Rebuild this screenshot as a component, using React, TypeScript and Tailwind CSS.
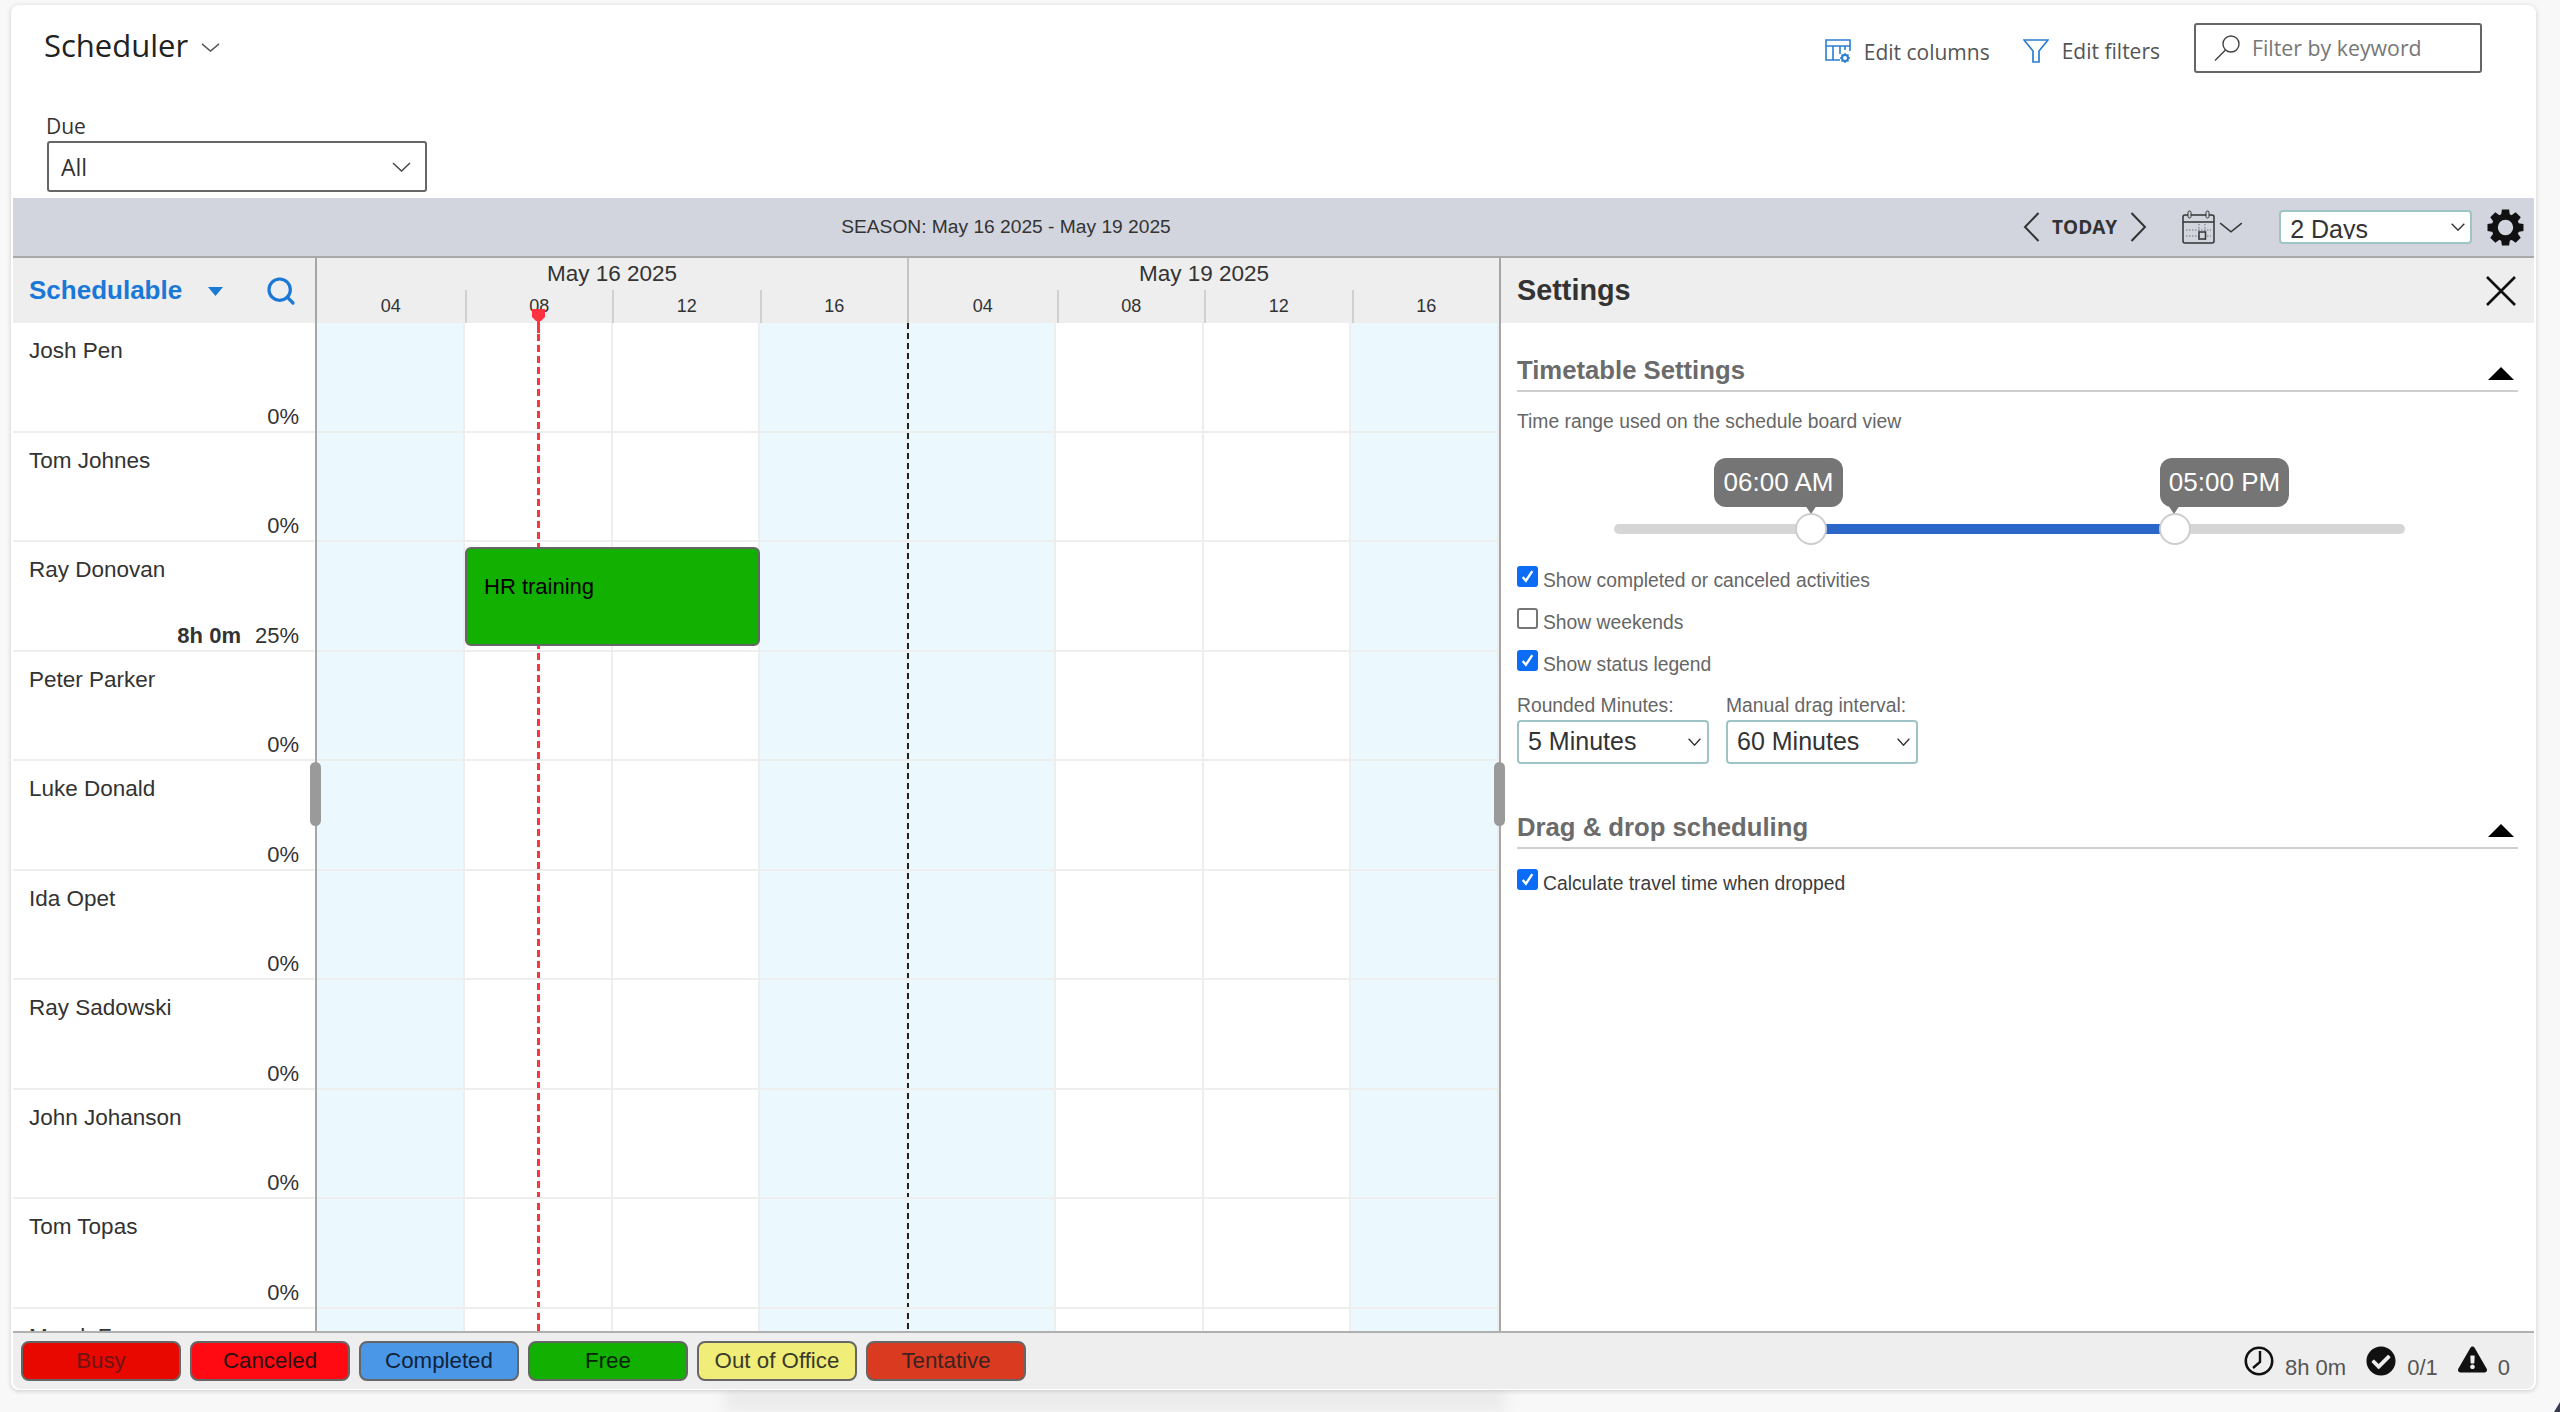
import { Search } from "lucide-react";
import { FaCheckCircle, FaExclamationTriangle } from "react-icons/fa";

const resources = [
  { name: "Josh Pen", pct: "0%" },
  { name: "Tom Johnes", pct: "0%" },
  { name: "Ray Donovan", pct: "25%", hours: "8h 0m" },
  { name: "Peter Parker", pct: "0%" },
  { name: "Luke Donald", pct: "0%" },
  { name: "Ida Opet", pct: "0%" },
  { name: "Ray Sadowski", pct: "0%" },
  { name: "John Johanson", pct: "0%" },
  { name: "Tom Topas", pct: "0%" },
  { name: "Marek F", pct: "" },
];

const legend = [
  { label: "Busy", cls: "bg-[#e90800] text-[#6f1414]" },
  { label: "Canceled", cls: "bg-[#ff0a12] text-[#2a1010]" },
  { label: "Completed", cls: "bg-[#4a97e8] text-[#10233a]" },
  { label: "Free", cls: "bg-[#12b000] text-[#06230a]" },
  { label: "Out of Office", cls: "bg-[#f0ee78] text-[#3a3a2a]" },
  { label: "Tentative", cls: "bg-[#da3a1f] text-[#3a2320]" },
];

const cells = [true, false, false, true, true, false, false, true];

const Chevron = ({ className }: { className: string }) => (
  <svg viewBox="0 0 20 10" fill="none" className={className} preserveAspectRatio="none">
    <path d="M1 1l9 8 9-8" stroke="currentColor" strokeWidth="1.4" vectorEffect="non-scaling-stroke" />
  </svg>
);

const SideChevron = ({ flip }: { flip?: boolean }) => (
  <svg viewBox="0 0 17 30" fill="none" className={`h-[30px] w-[17px] text-[#333] ${flip ? "rotate-180" : ""}`}>
    <path d="M15.5 1L2 15l13.5 14" stroke="currentColor" strokeWidth="2" />
  </svg>
);

const Gear = () => (
  <svg viewBox="0 0 36 36" className="ml-[15px] h-[37px] w-[37px] text-[#111]" fill="currentColor">
    {[0, 45, 90, 135, 180, 225, 270, 315].map((a) => (
      <path key={a} d="M14.5 0.5h7l1 7h-9z" transform={`rotate(${a} 18 18)`} />
    ))}
    <circle cx="18" cy="18" r="10.5" fill="none" stroke="currentColor" strokeWidth="6" />
  </svg>
);

const Check = ({ on = true }: { on?: boolean }) =>
  on ? (
    <span className="flex h-[21px] w-[21px] shrink-0 items-center justify-center rounded-[3px] bg-[#0b6cf5]">
      <svg viewBox="0 0 16 16" className="h-[17px] w-[17px]" fill="none">
        <path d="M3.5 8.5l3 3.5 6-9" stroke="#fff" strokeWidth="2.2" />
      </svg>
    </span>
  ) : (
    <span className="h-[21px] w-[21px] shrink-0 rounded-[3px] border-2 border-[#767676] bg-white" />
  );

const CheckRow = ({ label, on, dark }: { label: string; on?: boolean; dark?: boolean }) => (
  <div className="flex h-[42px] items-start gap-[5px]">
    <Check on={on} />
    <span className={`mt-[3px] text-[19.3px] leading-[24px] ${dark ? "text-[#3c3c3c]" : "text-[#666]"}`}>{label}</span>
  </div>
);

const SectionHead = ({ title }: { title: string }) => (
  <div className="flex h-[36px] justify-between border-b-2 border-[#cfcfcf]">
    <span className="text-[25.7px] font-bold leading-[28px] text-[#6b6b6b]">{title}</span>
    <svg viewBox="0 0 26 13" className="mr-[4px] mt-[11px] h-[13px] w-[26px]">
      <path d="M13 0l13 13H0z" fill="#000" />
    </svg>
  </div>
);

const TinySelect = ({ value }: { value: string }) => (
  <div className="flex h-[44px] w-[192px] items-center justify-between rounded-[4px] border-2 border-[#9fc4c6] bg-white pl-[9px] pr-[6px] text-[25px] text-[#333]">
    {value}
    <Chevron className="h-[8px] w-[13px] text-[#333]" />
  </div>
);

const Tip = ({ label, left, tail }: { label: string; left: number; tail: string }) => (
  <div
    className="absolute top-0 flex h-[49px] w-[129px] items-center justify-center rounded-[12px] bg-[#757575] text-[26px] text-white"
    style={{ left }}
  >
    {label}
    <span className={`absolute top-[47px] h-0 w-0 border-x-[6px] border-t-[9px] border-x-transparent border-t-[#757575] ${tail}`} />
  </div>
);

const Thumb = ({ left }: { left: number }) => (
  <span
    className="absolute top-[55px] h-[32px] w-[32px] rounded-full border-2 border-[#cdcdcd] bg-white"
    style={{ left }}
  />
);

const App = () => {
  return (
    <div className="relative h-[1412px] w-[2560px] overflow-hidden bg-[#f8f8f8] pl-[11px] pt-[5px] font-['Liberation_Sans',Arial,sans-serif]">
      <div className="absolute bottom-0 left-[725px] h-[24px] w-[780px] bg-[#ebebeb] blur-[6px]" />
      <svg viewBox="0 0 6 10" className="absolute bottom-0 right-0 h-[10px] w-[6px]">
        <path d="M6 0v10H0z" fill="#3b3b4e" />
      </svg>

      <div className="relative flex h-[1385px] w-[2525px] flex-col rounded-lg bg-white px-[2px] pb-[1px] shadow-[0_1px_5px_rgba(0,0,0,0.18)]">
        {/* top area */}
        <div className="flex h-[193px] shrink-0 justify-between font-['Open_Sans',sans-serif]">
          <div className="pl-[31px]">
            <div className="flex h-[80px] items-center gap-[13px]">
              <span className="text-[31px] font-medium leading-[44px] text-[#222]">Scheduler</span>
              <Chevron className="mt-[4px] h-[9px] w-[19px] text-[#555]" />
            </div>
            <div className="ml-[2px] mt-[28px] text-[21px] leading-[26px] text-[#333]">Due</div>
            <div className="ml-[3px] mt-[2px] flex h-[51px] w-[380px] items-center justify-between rounded-[3px] border-2 border-[#666] pl-[12px] pr-[14px] pt-[2px] text-[23px] text-[#333]">
              All
              <Chevron className="mb-[2px] h-[10px] w-[19px] text-[#444]" />
            </div>
          </div>

          <div className="flex h-[68px] items-start pr-[52px] pt-[18px] text-[21px] text-[#555]">
            <div className="mt-[16px] flex items-center gap-[13px]">
              <svg viewBox="0 0 26 25" fill="none" className="h-[25px] w-[26px] text-[#2b7dd3]">
                <path d="M1 1h24v6H1zM1 7v14h14M8 7v14M15 7v8M20 7v4M25 7v5" stroke="currentColor" strokeWidth="1.6" />
                <circle cx="20" cy="19" r="3" stroke="currentColor" strokeWidth="2" />
                <path d="M20 14v2M20 22v2M15 19h2M23 19h2M16.5 15.5l1.4 1.4M22 21l1.5 1.5M23.5 15.5L22 17M18 21l-1.5 1.5" stroke="currentColor" strokeWidth="1.5" />
              </svg>
              <span className="leading-[24px]">Edit columns</span>
            </div>
            <div className="ml-[33px] mt-[16px] flex items-center gap-[13px]">
              <svg viewBox="0 0 26 24" fill="none" className="h-[24px] w-[26px] text-[#2b7dd3]">
                <path d="M1 1h24L16 12v11h-6V12z" stroke="currentColor" strokeWidth="1.7" />
              </svg>
              <span className="leading-[24px]">Edit filters</span>
            </div>
            <div className="ml-[34px] flex h-[50px] w-[288px] items-center gap-[12px] rounded-[3px] border-2 border-[#666] pl-[18px] text-[#777]">
              <svg viewBox="0 0 26 26" fill="none" className="h-[26px] w-[26px] text-[#444]">
                <circle cx="17" cy="9" r="8" stroke="currentColor" strokeWidth="1.4" />
                <path d="M11.5 15L1 25.5" stroke="currentColor" strokeWidth="1.4" />
              </svg>
              <span className="text-[21.3px]">Filter by keyword</span>
            </div>
          </div>
        </div>

        {/* season bar */}
        <div className="flex h-[60px] shrink-0 items-center border-b-2 border-[#a9a9a9] bg-[#d2d5de]">
          <div className="w-[1986px] text-center text-[19.2px] text-[#333]">SEASON: May 16 2025 - May 19 2025</div>
          <div className="ml-[24px]">
            <SideChevron />
          </div>
          <span className="ml-[12px] font-['Open_Sans',sans-serif] text-[19px] font-bold text-[#333]">TODAY</span>
          <div className="ml-[13px]">
            <SideChevron flip />
          </div>
          <svg viewBox="0 0 33 34" fill="none" className="ml-[35px] h-[34px] w-[33px] text-[#333]">
            <path d="M3 5h27a2 2 0 012 2v24a2 2 0 01-2 2H3a2 2 0 01-2-2V7a2 2 0 012-2zM1 12h31" stroke="currentColor" strokeWidth="1.5" />
            <rect x="6" y="1" width="3" height="7" rx="1.5" fill="#d2d5de" stroke="currentColor" />
            <rect x="24" y="1" width="3" height="7" rx="1.5" fill="#d2d5de" stroke="currentColor" />
            <path d="M4 20h25M4 26h25M17 14v16M23 14v16" stroke="currentColor" strokeDasharray="1.5 1.5" opacity="0.6" />
            <rect x="17" y="22" width="6.5" height="7" fill="#d2d5de" stroke="currentColor" strokeWidth="1.5" />
          </svg>
          <Chevron className="ml-[4px] h-[11px] w-[24px] text-[#333]" />
          <div className="ml-[36px] flex h-[34px] w-[193px] items-start justify-between rounded-[4px] border-2 border-[#9fc4c6] bg-white pl-[9px] pr-[5px] text-[25px] text-[#333]">
            <span className="block h-[27px] overflow-hidden pt-[5px] leading-[24px]">2 Days</span>
            <Chevron className="mt-[11px] h-[8px] w-[14px] text-[#333]" />
          </div>
          <Gear />
        </div>

        {/* main */}
        <div className="relative flex h-[1073px] shrink-0">
          {/* resources */}
          <div className="flex w-[304px] shrink-0 flex-col border-r-2 border-[#a6a6a6]">
            <div className="flex h-[65px] shrink-0 items-center bg-[#eeeeee] pl-[16px] pr-[18px]">
              <span className="text-[26px] font-bold text-[#1a78d6]">Schedulable</span>
              <svg viewBox="0 0 15 9" className="ml-[26px] mt-[2px] h-[9px] w-[15px]">
                <path d="M0 0h15L7.5 9z" fill="#1a78d6" />
              </svg>
              <Search className="ml-auto h-[32px] w-[32px] text-[#1a78d6]" strokeWidth={2.4} />
            </div>
            <div className="h-[1008px] overflow-hidden">
              {resources.map((r) => (
                <div key={r.name} className="flex h-[109.5px] flex-col justify-between border-b-2 border-[#eeeeee] pb-[1px] pl-[16px] pr-[16px] pt-[15px] text-[22px] leading-[26px] text-[#333]">
                  <div className="text-[22.5px]">{r.name}</div>
                  {r.pct && (
                    <div className="text-right">
                      {r.hours && <span className="mr-[14px] font-bold">{r.hours}</span>}
                      {r.pct}
                    </div>
                  )}
                </div>
              ))}
            </div>
          </div>

          {/* timeline */}
          <div className="relative flex w-[1182px] shrink-0 flex-col">
            <div className="grid h-[65px] shrink-0 grid-cols-[590px_592px] bg-[#eeeeee] text-[#333]">
              {["May 16 2025", "May 19 2025"].map((d, i) => (
                <div key={d} className={i === 1 ? "border-l-2 border-[#c4c4c4]" : ""}>
                  <div className="h-[32px] pt-[2px] text-center text-[22.5px] leading-[28px]">{d}</div>
                  <div className="grid h-[33px] grid-cols-4 text-center text-[18px] leading-[32px]">
                    {["04", "08", "12", "16"].map((h, j) => (
                      <div key={h} className={j > 0 ? "border-l-2 border-[#d0d0d0]" : ""}>
                        {h}
                      </div>
                    ))}
                  </div>
                </div>
              ))}
            </div>

            <div className="relative h-[1008px] overflow-hidden">
              <div className="absolute inset-0 grid grid-cols-8">
                {cells.map((tint, i) => (
                  <div key={i} className={`border-r-2 border-[#eeeeee] ${tint ? "bg-[#ebf9fe]" : "bg-white"}`} />
                ))}
              </div>
              <div className="absolute left-[219.5px] top-0 h-full w-[3px] bg-[repeating-linear-gradient(to_bottom,#ff3340_0,#ff3340_7px,transparent_7px,transparent_11px)]" />
              <div className="absolute left-[589.5px] top-0 h-full w-[2px] bg-[repeating-linear-gradient(to_bottom,#222_0,#222_6px,transparent_6px,transparent_10px)]" />
              <div className="relative">
                {resources.map((r) => (
                  <div key={r.name} className="h-[109.5px] border-b-2 border-[#eeeeee]">
                    {r.hours && (
                      <div className="ml-[148px] mt-[5px] inline-block h-[99px] w-[295px] rounded-[6px] border-2 border-[#666] bg-[#12b000] pl-[17px] pt-[25px] align-top text-[22px] leading-[26px] text-black">
                        HR training
                      </div>
                    )}
                  </div>
                ))}
              </div>
            </div>

            <svg viewBox="0 0 13 24" className="absolute left-[214.5px] top-[51px] h-[24px] w-[13px]">
              <path d="M0 0h13v8l-4 4H8v12H5V12H4L0 8z" fill="#ff3340" />
            </svg>
          </div>

          {/* settings */}
          <div className="flex w-[1035px] shrink-0 flex-col border-l-2 border-[#a6a6a6] bg-white">
            <div className="flex h-[65px] shrink-0 items-center justify-between bg-[#eeeeee] pl-[16px] pr-[18px]">
              <span className="text-[28.8px] font-bold text-[#333]">Settings</span>
              <svg viewBox="0 0 30 30" fill="none" className="h-[30px] w-[30px]">
                <path d="M1 1l28 28M29 1L1 29" stroke="#111" strokeWidth="2.6" />
              </svg>
            </div>
            <div className="px-[16px] pt-[33px]">
              <SectionHead title="Timetable Settings" />
              <div className="mt-[18px] text-[19.3px] leading-[24px] text-[#666]">Time range used on the schedule board view</div>

              <div className="relative mt-[24px] h-[87px]">
                <div className="absolute left-[97px] top-[66px] h-[10px] w-[791px] overflow-hidden rounded-full bg-[#d6d6d6]">
                  <div className="ml-[197px] h-full w-[364px] bg-[#2b67c9]" />
                </div>
                <Tip label="06:00 AM" left={197} tail="left-[91px]" />
                <Tip label="05:00 PM" left={643} tail="left-[8px]" />
                <Thumb left={278} />
                <Thumb left={642} />
              </div>

              <div className="mt-[21px]">
                <CheckRow label="Show completed or canceled activities" on />
                <CheckRow label="Show weekends" on={false} />
                <CheckRow label="Show status legend" on />
              </div>

              <div className="mt-[2px] flex gap-[17px]">
                <div>
                  <div className="mb-[2px] text-[19.3px] leading-[24px] text-[#666]">Rounded Minutes:</div>
                  <TinySelect value="5 Minutes" />
                </div>
                <div>
                  <div className="mb-[2px] text-[19.3px] leading-[24px] text-[#666]">Manual drag interval:</div>
                  <TinySelect value="60 Minutes" />
                </div>
              </div>

              <div className="mt-[49px]">
                <SectionHead title="Drag & drop scheduling" />
              </div>
              <div className="mt-[20px]">
                <CheckRow label="Calculate travel time when dropped" dark />
              </div>
            </div>
          </div>

          <span className="absolute left-[297px] top-[504px] h-[64px] w-[11px] rounded-full bg-[#9a9a9a]" />
          <span className="absolute left-[1481px] top-[504px] h-[64px] w-[11px] rounded-full bg-[#9a9a9a]" />
        </div>

        {/* legend */}
        <div className="flex h-[58px] shrink-0 items-center rounded-b-lg border-t-2 border-[#b0b0b0] bg-[#eeeeee] pb-[1px] pl-[8px] pr-[24px] text-[22.3px]">
          <div className="flex gap-[9px]">
            {legend.map((l) => (
              <div key={l.label} className={`flex h-[40px] w-[160px] items-center justify-center rounded-[8px] border-2 border-[#666] ${l.cls}`}>
                {l.label}
              </div>
            ))}
          </div>
          <div className="ml-auto flex items-start pt-[5px] text-[22px] text-[#555]">
            <svg viewBox="0 0 30 30" fill="none" className="h-[30px] w-[30px] text-[#111]">
              <circle cx="15" cy="15" r="13.2" stroke="currentColor" strokeWidth="2.6" />
              <path d="M16 5v11l-7 6" stroke="currentColor" strokeWidth="2.4" />
            </svg>
            <span className="ml-[11px] mt-[10px] leading-[24px]">8h 0m</span>
            <FaCheckCircle className="ml-[20px] h-[30px] w-[30px] text-[#111]" />
            <span className="ml-[11px] mt-[10px] leading-[24px]">0/1</span>
            <FaExclamationTriangle className="ml-[20px] h-[27px] w-[29px] text-[#111]" />
            <span className="ml-[11px] mt-[10px] leading-[24px]">0</span>
          </div>
        </div>
      </div>
    </div>
  );
};

export default App;
